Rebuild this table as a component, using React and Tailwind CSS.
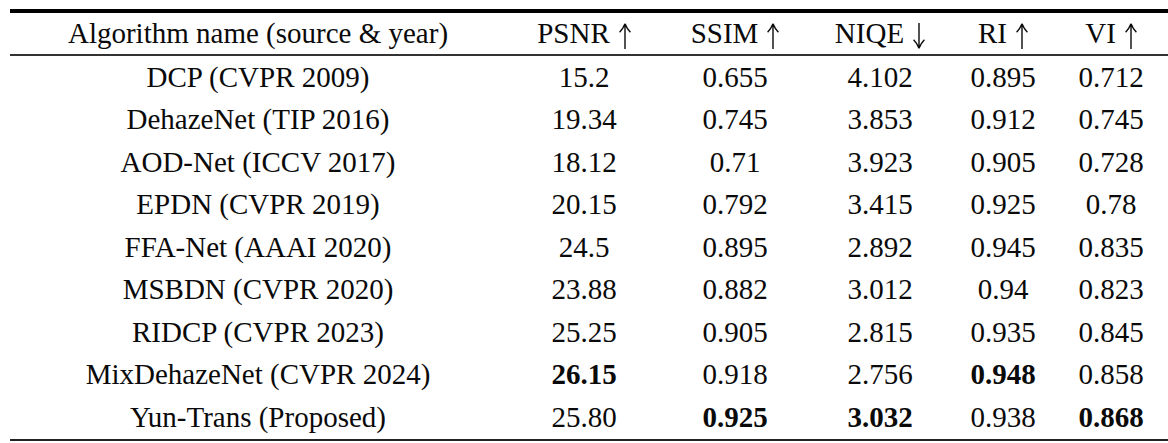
const columns = [
  { label: 'Algorithm name (source & year)', width: 'w-[496px]' },
  { label: 'PSNR', arrow: 'up', width: 'w-[156px]' },
  { label: 'SSIM', arrow: 'up', width: 'w-[146px]' },
  { label: 'NIQE', arrow: 'down', width: 'w-[144px]' },
  { label: 'RI', arrow: 'up', width: 'w-[102px]' },
  { label: 'VI', arrow: 'up', width: 'w-[114px]' },
];

// bold cells are marked with a leading "*"
const rows = [
  ['DCP (CVPR 2009)', '15.2', '0.655', '4.102', '0.895', '0.712'],
  ['DehazeNet (TIP 2016)', '19.34', '0.745', '3.853', '0.912', '0.745'],
  ['AOD-Net (ICCV 2017)', '18.12', '0.71', '3.923', '0.905', '0.728'],
  ['EPDN (CVPR 2019)', '20.15', '0.792', '3.415', '0.925', '0.78'],
  ['FFA-Net (AAAI 2020)', '24.5', '0.895', '2.892', '0.945', '0.835'],
  ['MSBDN (CVPR 2020)', '23.88', '0.882', '3.012', '0.94', '0.823'],
  ['RIDCP (CVPR 2023)', '25.25', '0.905', '2.815', '0.935', '0.845'],
  ['MixDehazeNet (CVPR 2024)', '*26.15', '0.918', '2.756', '*0.948', '0.858'],
  ['Yun-Trans (Proposed)', '25.80', '*0.925', '*3.032', '0.938', '*0.868'],
];

function Arrow({ dir }) {
  const d = dir === 'up'
    ? 'M6 0.8V26 M6 0.8Q4.2 5.5 0.6 9.2 M6 0.8Q7.8 5.5 11.4 9.2'
    : 'M6 25.2V0 M6 25.2Q4.2 20.5 0.6 16.8 M6 25.2Q7.8 20.5 11.4 16.8';
  return (
    <svg role="img" aria-label={dir === 'up' ? '↑' : '↓'} viewBox="0 0 12 26" className="w-[12px] h-[26px] ml-[9px] mt-[5px] shrink-0">
      <path d={d} fill="none" stroke="currentColor" strokeWidth="1.4" />
    </svg>
  );
}

function Cell({ value, width }) {
  const bold = value.startsWith('*');
  return (
    <div className={`${width} shrink-0 flex items-center justify-center whitespace-nowrap ${bold ? 'font-bold' : 'font-normal'}`}>
      {bold ? value.slice(1) : value}
    </div>
  );
}

export default function App() {
  return (
    <div className="w-[1168px] h-[443px] bg-white overflow-hidden pt-[9px] pl-[10px] font-['Liberation_Serif','Times_New_Roman',serif] text-[29px] leading-none text-[#0a0a0a]">
      <div className="w-[1158px] border-t-4 border-b-2 border-t-black border-b-[#222]">
        <div className="flex h-[43px] border-b-2 border-[#333]">
          {columns.map(c => (
            <div key={c.label} className={`${c.width} shrink-0 flex items-center justify-center whitespace-nowrap`}>
              {c.label}
              {c.arrow && <Arrow dir={c.arrow} />}
            </div>
          ))}
        </div>
        {rows.map(r => (
          <div key={r[0]} className="flex h-[42.5px]">
            {r.map((v, i) => (
              <Cell key={i} value={v} width={columns[i].width} />
            ))}
          </div>
        ))}
      </div>
    </div>
  );
}
